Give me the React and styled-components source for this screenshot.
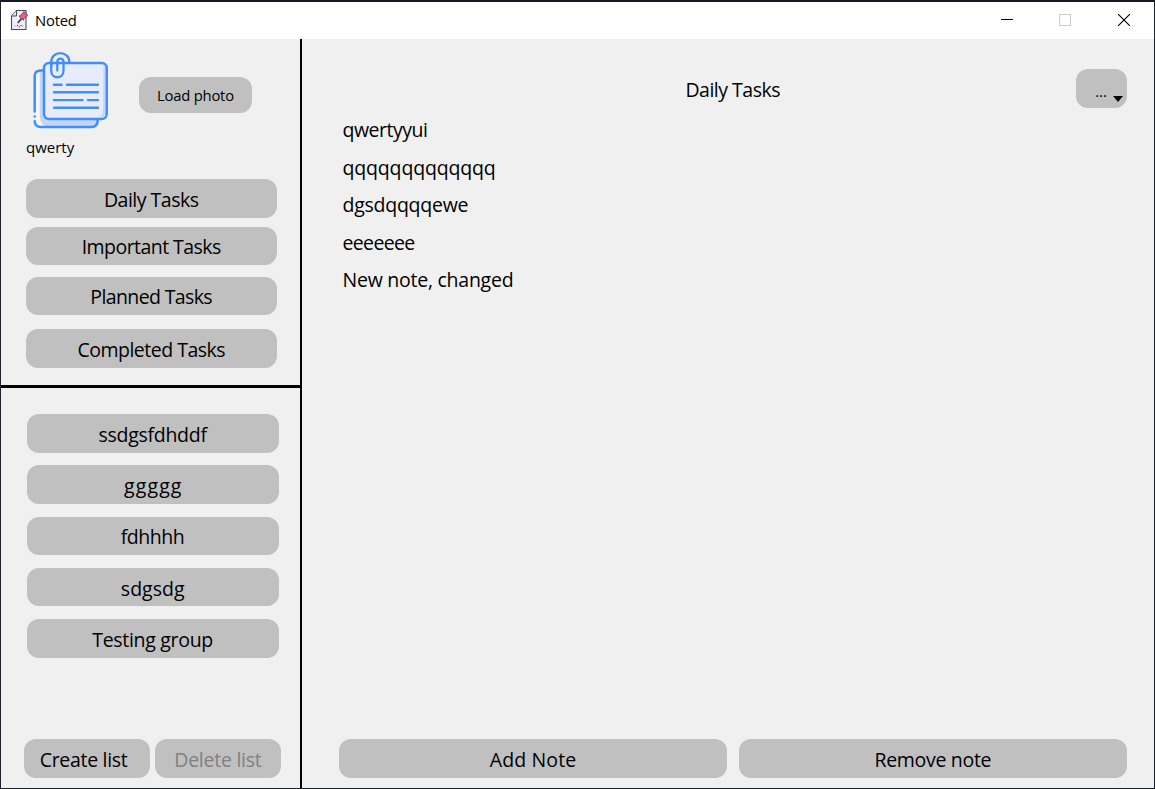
import React from "react";
import styled, { createGlobalStyle } from "styled-components";

const Global = createGlobalStyle`
  * { box-sizing: border-box; }
  body { margin: 0; background: #f0f0f0; }
`;

const Window = styled.div`
  width: 1155px;
  height: 789px;
  display: flex;
  flex-direction: column;
  overflow: hidden;
  background: #f0f0f0;
  border: 1px solid #1c202b;
  border-top: 2px solid #141b27;
  color: #000;
  font-family: "Open Sans", "Noto Sans", sans-serif;
`;

const TitleBar = styled.header`
  height: 37px;
  flex: none;
  display: flex;
  align-items: flex-start;
  padding: 0 1px 0 8px;
  background: #fff;
`;

const AppName = styled.span`
  flex: 1;
  margin: 8px 0 0 6px;
  font-size: 14.8px;
  line-height: 20px;
  letter-spacing: -0.2px;
`;

const WindowControl = styled.div`
  width: 58.5px;
  height: 36px;
  display: flex;
  align-items: center;
  justify-content: center;
`;

const Body = styled.div`
  flex: 1;
  display: flex;
  min-height: 0;
`;

const Sidebar = styled.aside`
  width: 301px;
  flex: none;
  display: flex;
  flex-direction: column;
  border-right: 2px solid #000;
`;

const Profile = styled.section`
  height: 349px;
  flex: none;
  padding: 12px 0 0 25px;
  border-bottom: 3px solid #000;
`;

const PhotoRow = styled.div`
  display: flex;
  height: 80px;
`;

const UserName = styled.div`
  height: 24px;
  margin: 4px 0 20px;
  font-size: 15px;
  line-height: 24px;
`;

const Button = styled.button`
  width: ${(p) => p.$w}px;
  height: ${(p) => p.$h || 38.5}px;
  flex: none;
  display: flex;
  align-items: center;
  justify-content: center;
  margin: ${(p) => p.$m || 0};
  padding: ${(p) => p.$pad || "3px 0 0"};
  border: 0;
  border-radius: 12px;
  background: #c0c0c0;
  color: ${(p) => (p.disabled ? "#808080" : "#000")};
  font-family: inherit;
  font-size: ${(p) => p.$size || 19.5}px;
  line-height: 26px;
  white-space: nowrap;
`;

const Label = styled.span`
  letter-spacing: ${(p) => p.$track || 0}px;
  margin-right: ${(p) => -(p.$track || 0)}px;
`;

const Groups = styled.section`
  flex: 1;
  display: flex;
  flex-direction: column;
  padding: 26px 0 10.5px 26px;
`;

const GroupActions = styled.div`
  display: flex;
  gap: 5.5px;
  margin: auto 0 0 -3px;
`;

const Main = styled.main`
  flex: 1;
  display: flex;
  flex-direction: column;
  padding: 30px 27px 10.5px 37px;
`;

const Heading = styled.div`
  display: flex;
  height: 39px;
`;

const Title = styled.h1`
  flex: 1;
  margin: 0;
  padding: 8px 0 0 51px;
  text-align: center;
  font-size: 19.5px;
  font-weight: 400;
  line-height: 26px;
`;

const MenuButton = styled.button`
  width: 51px;
  height: 39px;
  display: flex;
  align-items: flex-end;
  justify-content: flex-end;
  gap: 6px;
  padding: 0 4px 6px 0;
  border: 0;
  border-radius: 12px;
  background: #c0c0c0;
  font: 15px/22px "Open Sans", sans-serif;
`;

const Notes = styled.ul`
  flex: 1;
  margin: 3px 0 0;
  padding: 0 0 0 3.5px;
  list-style: none;
`;

const Note = styled.li`
  height: 37.5px;
  font-size: 19.5px;
  line-height: 37px;
`;

const NoteActions = styled.div`
  display: flex;
  gap: 12px;
`;

const NoteIcon = () => (
  <svg width="20" height="22" viewBox="0 0 20 22" fill="none" style={{ marginTop: 7 }}>
    <path d="M7.5 1.5H17V20.5H2.500V7Z" fill="#eeeff8" stroke="#4b4d55" strokeWidth="1.1" />
    <path d="M2.500 7H7.5V1.5" fill="#dde0ec" stroke="#4b4d55" strokeWidth="1" />
    <path d="M8.8 14L12.5 9.500" stroke="#34343c" strokeWidth="1.6" />
    <path d="M10 7.200L14.4 11.200L15.2 9L18.8 6.300L14.800 2.500L12.4 5.8Z" fill="#ed6178" stroke="#5b3440" strokeWidth=".8" />
    <path d="M5.500 17h2M12.500 17h2" stroke="#f5a9b4" strokeWidth="1.5" />
    <path d="M8 16.500h1M11.500 16.500h1M9.700 17.800h1" stroke="#333" strokeWidth="1.2" />
  </svg>
);

const PapersIcon = () => (
  <svg width="82" height="80" viewBox="26 51 82 80" fill="none" strokeLinecap="round" strokeLinejoin="round">
    <path d="M43 70H40Q35 70 35 75V121Q35 126.500 40 126.500H92Q97.500 126.500 97.500 119H49Q43 119 43 113Z" fill="#c5d5f9" />
    <path d="M35 72H39.800V115Q39.800 124 46 126H41Q35 126 35 121Z" fill="#f3f6fd" />
    <path d="M42.500 70.500H40Q34.700 71 34.700 76V111.500M34.700 116.400V116.500M34.700 121.300Q34.800 127 41 127H91.500Q97.700 127 97.700 120" stroke="#418dfc" strokeWidth="2.500" />
    <rect x="44" y="63" width="62.700" height="56" rx="5" fill="#e7ecfb" stroke="#418dfc" strokeWidth="2.500" />
    <path d="M103.500 66Q105 66 105 69V113Q105 117 101 117H98Q103 116 103 110Z" fill="#c5d5f9" />
    <path d="M54 84.700H61.500M67 84.700H98M54 92.300H98M54 100.100H82.500M88 100.100H98M54 107.700H98" stroke="#418dfc" strokeWidth="2.400" />
    <path d="M51.200 66V62.500C51.200 50 69.400 50 69.400 62.500" stroke="#418dfc" strokeWidth="2.300" />
    <path d="M57.300 70.500V62Q57.300 58.600 60.400 58.600Q63.500 58.600 63.500 62V70.500C63.500 79.500 51.200 79.500 51.200 70.500V63" stroke="#418dfc" strokeWidth="2.300" />
  </svg>
);

const categories = [
  { text: "Daily Tasks", gap: "0", track: -0.5 },
  { text: "Important Tasks", gap: "9px 0 0", track: -0.55 },
  { text: "Planned Tasks", gap: "11.5px 0 0", track: -0.62 },
  { text: "Completed Tasks", gap: "14px 0 0", track: -0.5 },
];
const groups = [
  { text: "ssdgsfdhddf", track: -0.28 },
  { text: "ggggg", track: 1.1 },
  { text: "fdhhhh", track: -0.45 },
  { text: "sdgsdg", track: 0.05 },
  { text: "Testing group", track: -0.3 },
];
const notes = [
  { text: "qwertyyui", track: -0.5 },
  { text: "qqqqqqqqqqqqq", track: -0.15 },
  { text: "dgsdqqqqewe", track: -0.25 },
  { text: "eeeeeee", track: -0.65 },
  { text: "New note, changed", track: -0.25 },
];

export default function App() {
  return (
    <Window>
      <Global />
      <TitleBar>
        <NoteIcon />
        <AppName>Noted</AppName>
        <WindowControl>
          <svg width="12" height="12"><path d="M0 5.500H12" stroke="#000" /></svg>
        </WindowControl>
        <WindowControl>
          <svg width="12" height="12"><rect x=".5" y=".5" width="11" height="11" fill="none" stroke="#ccc" /></svg>
        </WindowControl>
        <WindowControl>
          <svg width="12" height="12"><path d="M0 0L12 12M12 0L0 12" stroke="#000" strokeWidth="1.100" /></svg>
        </WindowControl>
      </TitleBar>
      <Body>
        <Sidebar>
          <Profile>
            <PhotoRow>
              <PapersIcon />
              <Button $w={113} $h={36} $size={14.8} $pad="0 0 1px" $m="26px 0 0 31px">
                <Label $track={-0.2}>Load photo</Label>
              </Button>
            </PhotoRow>
            <UserName>qwerty</UserName>
            {categories.map((c) => (
              <Button key={c.text} $w={251} $m={c.gap}><Label $track={c.track}>{c.text}</Label></Button>
            ))}
          </Profile>
          <Groups>
            {groups.map((g) => (
              <Button key={g.text} $w={251.5} $m="0 0 12.8px"><Label $track={g.track}>{g.text}</Label></Button>
            ))}
            <GroupActions>
              <Button $w={125.5} $pad="3px 6px 0 0"><Label $track={-0.3}>Create list</Label></Button>
              <Button $w={126} disabled><Label $track={-0.25}>Delete list</Label></Button>
            </GroupActions>
          </Groups>
        </Sidebar>
        <Main>
          <Heading>
            <Title><Label $track={-0.5}>Daily Tasks</Label></Title>
            <MenuButton>
              <span>...</span>
              <svg width="10" height="6"><path d="M0 0H10L5 6Z" /></svg>
            </MenuButton>
          </Heading>
          <Notes>
            {notes.map((n) => <Note key={n.text}><Label $track={n.track}>{n.text}</Label></Note>)}
          </Notes>
          <NoteActions>
            <Button $w={388}><Label $track={0.1}>Add Note</Label></Button>
            <Button $w={388}><Label $track={-0.3}>Remove note</Label></Button>
          </NoteActions>
        </Main>
      </Body>
    </Window>
  );
}
